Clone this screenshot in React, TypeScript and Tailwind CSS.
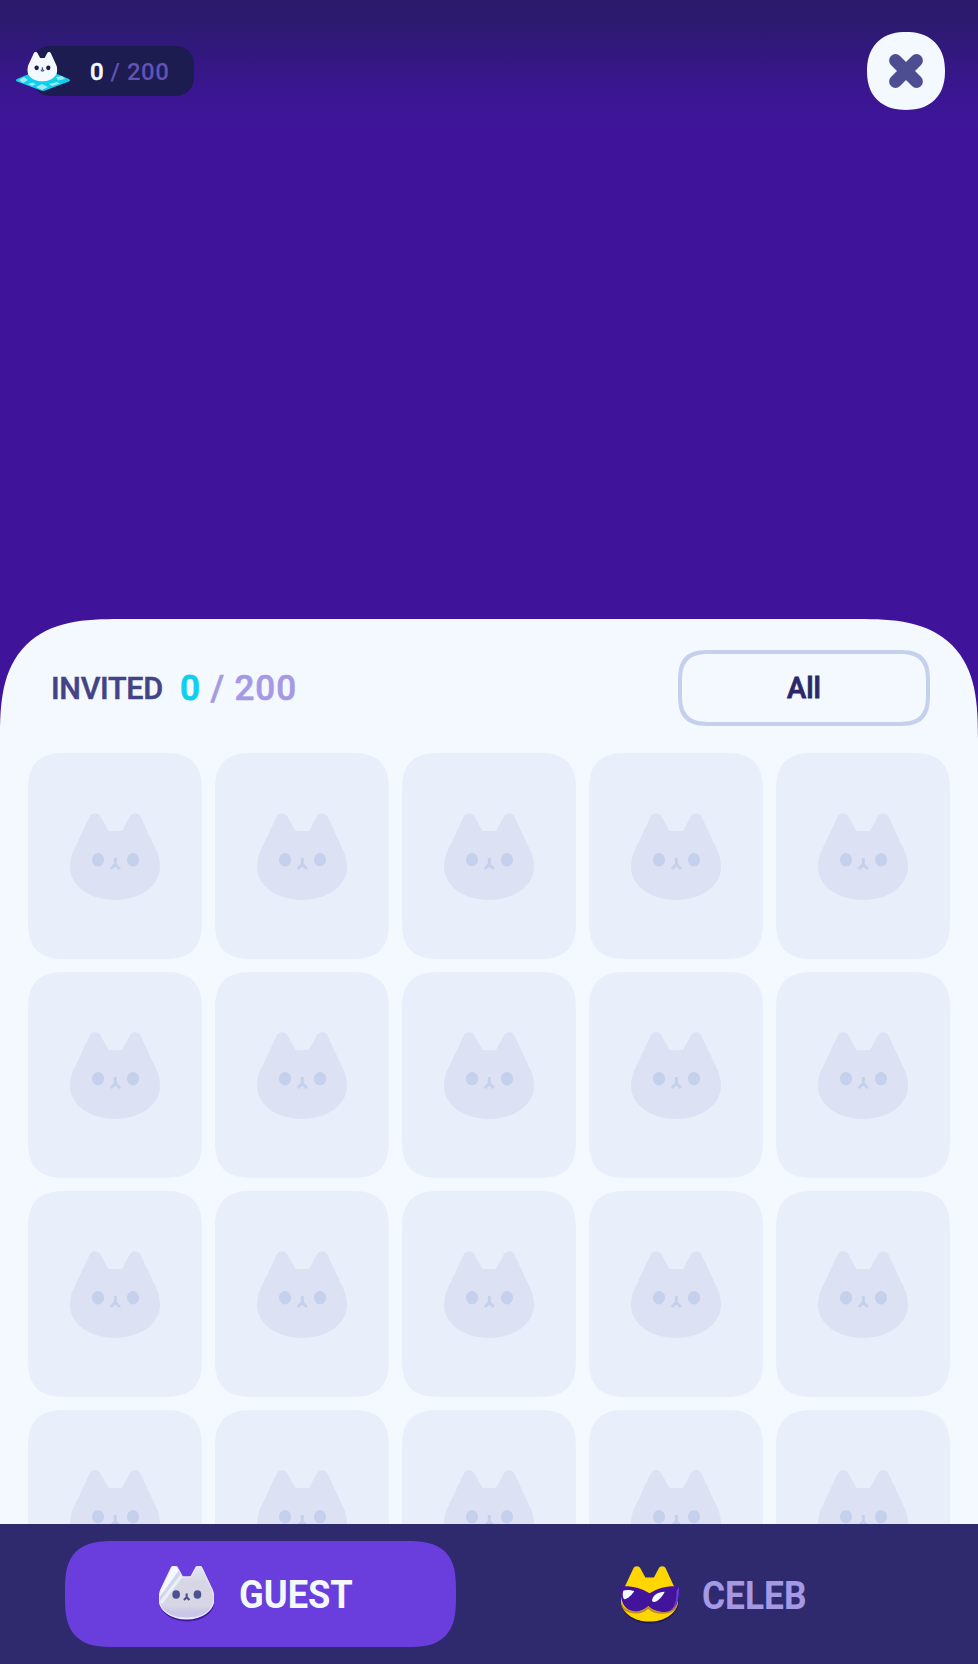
const HEAD =
  'M19.5 4C21.5 -1 28.5 -1 30.8 4L38.5 18H52L59.5 4C62 -1 68.5 -1 70.7 4L87.5 40C89 44 90 49 90 54C90 73 70 87 45 87C20 87 0 73 0 54C0 49 1 44 2.5 40Z';

const MOUTH = 'M45.3 45V51.5M40.8 56L45.3 51.5L49.8 56';

function GhostCat() {
  return (
    <svg viewBox="0 0 90 87" className="mt-[60px] h-[87px] w-[90px]">
      <path d={HEAD} fill="#dce2f4" />
      <ellipse cx="28" cy="46.7" rx="6.1" ry="6.7" fill="#c5d0ed" />
      <ellipse cx="63" cy="46.7" rx="6.1" ry="6.7" fill="#c5d0ed" />
      <path d={MOUTH} fill="none" stroke="#c5d0ed" strokeWidth="3" />
    </svg>
  );
}

function FloatingCat() {
  return (
    <svg viewBox="0 0 54 40" className="h-[40px] w-[54px] shrink-0">
      <path d="M1 27L27 16L53 27Q55 28.500 53 29.500L29 38.500Q27 39.300 25 38.500L1 29.500Q-1 28 1 27Z" fill="#0dd0ee" />
      <path d="M3 28L8 25L12 28L7 31ZM20 35L26 32L32 35L26 38ZM40 25L46 24L49 27L42 28.500ZM12 32L16 30.500L20 32L16 34ZM33 32L41 30L44 31.500L36 34Z" fill="#9fe6f6" />
      <svg x="11.300" y="0" width="30" height="29.500" viewBox="0 0 90 87" preserveAspectRatio="none">
        <path d={HEAD} fill="#f4f8ff" />
        <ellipse cx="28" cy="46.700" rx="6.500" ry="7" fill="#1c1c50" />
        <ellipse cx="63" cy="46.700" rx="6.500" ry="7" fill="#1c1c50" />
        <path d={MOUTH} fill="none" stroke="#4c5190" strokeWidth="4" />
        <path d="M43 57H48" stroke="#0dd0ee" strokeWidth="4" />
      </svg>
    </svg>
  );
}

function GuestCat() {
  return (
    <svg viewBox="0 0 90 92" className="h-[56px] w-[55px] shrink-0">
      <defs>
        <clipPath id="guest-head">
          <path d={HEAD} />
        </clipPath>
        <linearGradient id="guest-fill" x1="0" y1="0" x2="0" y2="1">
          <stop offset="0" stopColor="#e4e6f2" />
          <stop offset="0.3" stopColor="#d6d6e4" />
          <stop offset="0.75" stopColor="#d6d6e4" />
          <stop offset="1" stopColor="#bdb9e6" />
        </linearGradient>
      </defs>
      <path d={HEAD} fill="#43179f" transform="translate(1 4)" />
      <path d={HEAD} fill="url(#guest-fill)" />
      <g clipPath="url(#guest-head)">
        <path d="M0 -5H33V10L0 54Z" fill="#f4f8ff" />
        <path d="M34 12L38 19L6 61L0 62V57Z" fill="#e9effb" />
        <path d="M32 8L35 14L2 57L0 52Z" fill="#d2d5e8" />
        <path d="M0 59C6 75 24 84 45 84S84 75 90 59V90H0Z" fill="#e4e8f8" />
        <path d="M3 64C14 75 28 78 45 78S76 75 87 64C80 81 63 84 45 84S10 81 3 64Z" fill="#c9c6e8" />
      </g>
      <path d={HEAD} fill="none" stroke="#e7ebf8" strokeWidth="2" />
      <ellipse cx="28" cy="46.700" rx="6.300" ry="7" fill="#4c5190" />
      <ellipse cx="63" cy="46.700" rx="6.300" ry="7" fill="#4c5190" />
      <path d={MOUTH} fill="none" stroke="#4c5190" strokeWidth="3.600" />
    </svg>
  );
}

function CelebCat() {
  return (
    <svg viewBox="0 0 61 59" className="h-[59px] w-[61px] shrink-0">
      <defs>
        <clipPath id="celeb-head">
          <path d={HEAD} transform="translate(2 1) scale(.633 .639)" />
        </clipPath>
      </defs>
      <path d={HEAD} fill="#201b55" transform="translate(2.500 3) scale(.633 .639)" />
      <path d={HEAD} fill="#ffd600" transform="translate(2 1) scale(.633 .639)" />
      <path
        clipPath="url(#celeb-head)"
        d="M2 39C6 49 22 50 29 42.500C37 50 54 50 59 39"
        fill="none"
        stroke="#c08a30"
        strokeWidth="2"
      />
      <path
        d="M1 21.500C12 20.500 22 23 30.700 28.300C39 23 49 20.500 60 21.500C61 23 60.500 26 59.800 28C60 40 54 46.500 46 47C38 47 33 44.500 29.300 41C25 45 20 47 15 46.300C6 45 2.500 39 1.800 28.500C.5 26 0 23 1 21.500Z"
        fill="#42149c"
      />
      <path d="M60 22C60 38 56 44 50 46C56 43 58 34 57.500 26Z" fill="#693edc" />
      <path d="M4.500 25.500C7 24.500 12 24.800 15.300 26C13 30 9 33.500 5.500 34.300C3.500 33 3.300 28 4.500 25.500ZM33 35C34.500 29.500 39 27 45.700 26.700C43.500 31.500 39.500 36 35.500 37C33.800 37 32.800 36.200 33 35Z" fill="#f4f8ff" />
    </svg>
  );
}

export default function App() {
  return (
    <div
      className="flex h-[1664px] w-[978px] flex-col overflow-hidden bg-[#3f149b] font-medium"
      style={{ fontFamily: 'Roboto, "Liberation Sans", sans-serif' }}
    >
      <header className="flex h-[619px] shrink-0 items-start justify-between bg-[linear-gradient(to_bottom,#2b1b6b_0px,#2c1a70_24px,#3a1690_88px,#3f149b_130px)] pr-[33px] pt-8">
        <div className="mt-3.5 flex h-[50px] pl-8">
          <div className="flex h-[50px] w-[162px] items-center rounded-[18px] bg-[#1c1c50]">
            <div className="-ml-4 mt-0.5 flex">
              <FloatingCat />
            </div>
            <p className="ml-[20px] mt-0.5 whitespace-pre text-[24px] leading-none tracking-[0.5px] text-[#6353b5]">
              <span className="text-[#f4f8ff] [-webkit-text-stroke:0.5px_#f4f8ff]">0</span> / 200
            </p>
          </div>
        </div>
        <button className="flex size-[78px] items-center justify-center rounded-[39px] bg-[#f4f8ff] [@supports(corner-shape:squircle)]:[corner-shape:superellipse(1.2)]">
          <svg viewBox="0 0 34 34" className="size-[34px]">
            <path d="M6.500 6.500L27.500 27.500M27.500 6.500L6.500 27.500" stroke="#4d4e91" strokeWidth="12.800" strokeLinecap="round" />
          </svg>
        </button>
      </header>

      <main className="h-[905px] shrink-0 overflow-hidden rounded-t-[86px] bg-[#f4f8ff] px-7 [@supports(corner-shape:squircle)]:rounded-t-[120px] [@supports(corner-shape:squircle)]:[corner-shape:superellipse(1.5)]">
        <div className="flex h-[134px] items-start justify-between pl-[23px] pr-5 pt-[31px]">
          <div className="flex h-[76px] items-center whitespace-pre">
            <h1 className="mt-0.5 w-[110px] text-[30.500px] leading-none tracking-[-0.3px] text-[#424486] [-webkit-text-stroke:0.5px_#424486]">INVITED</h1>
            <p className="ml-[19px] text-[35px] leading-none tracking-[0.9px] text-[#a699e4] [-webkit-text-stroke:0.6px_#a699e4]">
              <span className="text-[#0dd0ee] [-webkit-text-stroke:1px_#0dd0ee]">0</span> / 200
            </p>
          </div>
          <button className="flex h-[76px] w-[252px] items-center justify-center rounded-[24px] border-4 border-[#c5d0ed] text-[29px] leading-none text-[#2d2769] [-webkit-text-stroke:0.8px_#2d2769] [@supports(corner-shape:squircle)]:rounded-[32px] [@supports(corner-shape:squircle)]:[corner-shape:superellipse(1.5)]">
            All
          </button>
        </div>
        <div className="grid grid-cols-5 gap-x-[13.500px] gap-y-[13.500px]">
          {Array.from({ length: 20 }, (_, i) => (
            <div
              key={i}
              className="flex h-[205.500px] justify-center rounded-[30px] bg-[#e8effb] [@supports(corner-shape:squircle)]:rounded-[40px] [@supports(corner-shape:squircle)]:[corner-shape:superellipse(1.5)]"
            >
              <GhostCat />
            </div>
          ))}
        </div>
      </main>

      <nav className="flex h-[140px] shrink-0 bg-[#2f2a6e] px-[65px] pt-[17px]">
        <button className="flex h-[106px] w-[391px] items-center rounded-[38px] bg-[#693edc] pl-[94px] text-[39px] font-bold leading-none text-[#f4f8ff] [@supports(corner-shape:squircle)]:rounded-[50px] [@supports(corner-shape:squircle)]:[corner-shape:superellipse(1.5)]">
          <GuestCat />
          <span className="ml-[25px] mt-0.5 origin-left scale-x-[0.93]">GUEST</span>
        </button>
        <button className="flex h-[106px] w-[391px] items-center pl-[163px] text-[38px] font-bold leading-none text-[#a699e4]">
          <CelebCat />
          <span className="ml-[22px] mt-1 origin-left scale-x-[0.93]">CELEB</span>
        </button>
      </nav>
    </div>
  );
}
